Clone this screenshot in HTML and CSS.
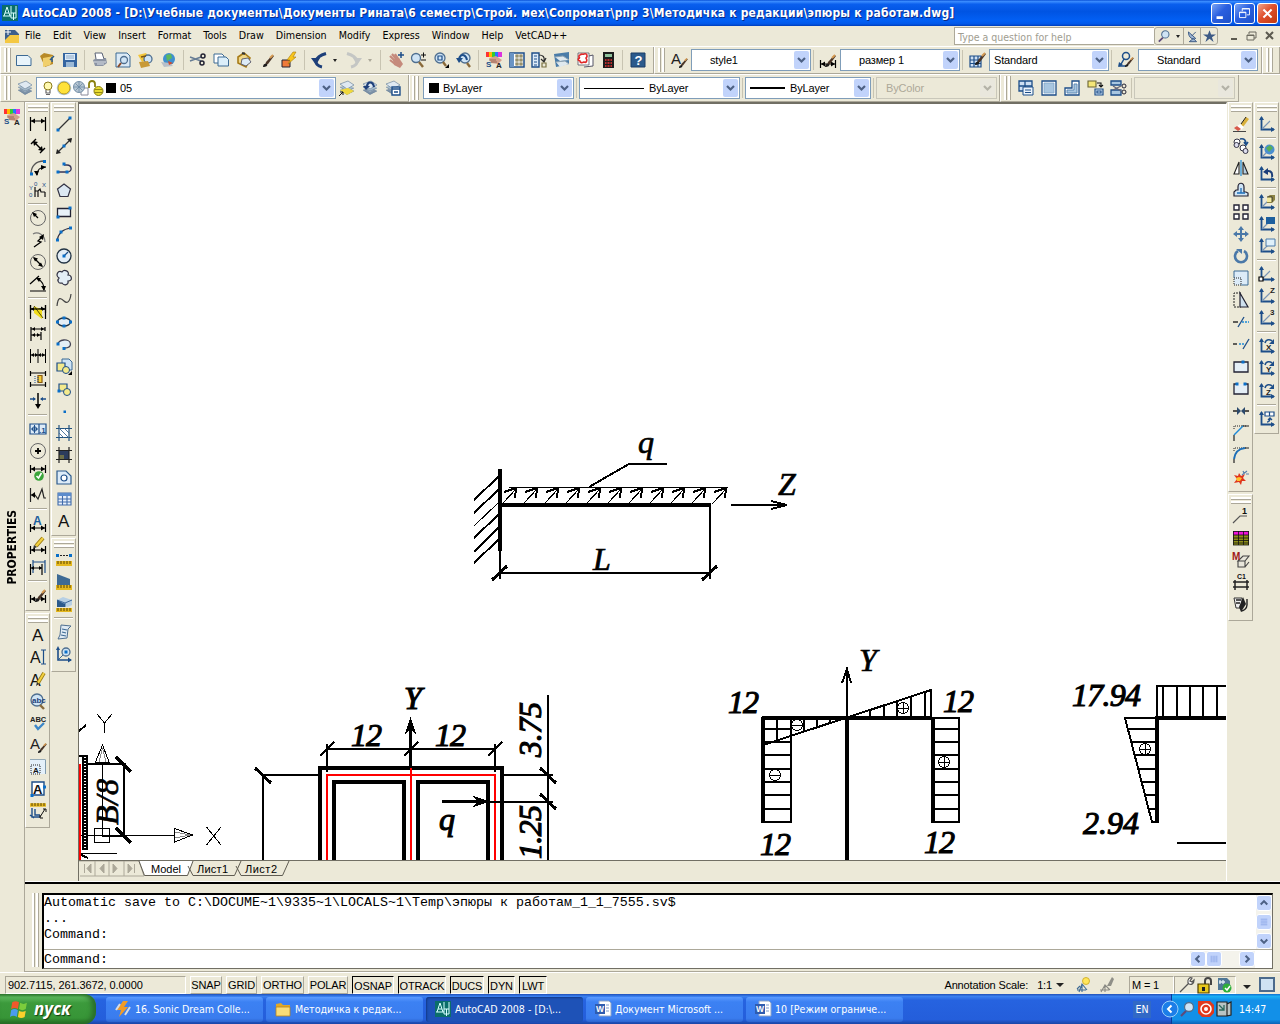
FILE: index.html
```html
<!DOCTYPE html>
<html lang="ru">
<head>
<meta charset="UTF-8">
<title>AutoCAD 2008</title>
<link rel="stylesheet" href="styles.css">
</head>
<body>

<div class="titlebar">
  <i data-icon="acad"></i>
  <span class="title-text">AutoCAD 2008 - [D:\Учебные документы\Документы Рината\6 семестр\Строй. мех\Сопромат\рпр 3\Методичка к редакции\эпюры к работам.dwg]</span>
  <div class="win-buttons">
    <svg class="win-btn" viewBox="0 0 21 21"><path d="M5 15h7" stroke="#fff" stroke-width="3"/></svg>
    <svg class="win-btn" viewBox="0 0 21 21"><path d="M8 8V5h8v7h-3M5 9h7v6H5zM5 9.5h7M8 5.5h8" stroke="#fff" fill="none"/></svg>
    <svg class="win-btn close" viewBox="0 0 21 21"><path d="M6 6l9 9M15 6l-9 9" stroke="#fff" stroke-width="2.2"/></svg>
  </div>
</div>

<div class="menubar">
  <i data-icon="dwg"></i>
  <ul class="menu">
    <li>File</li><li>Edit</li><li>View</li><li>Insert</li><li>Format</li><li>Tools</li><li>Draw</li><li>Dimension</li><li>Modify</li><li>Express</li><li>Window</li><li>Help</li><li>VetCAD++</li>
  </ul>
  <div class="help-box">Type a question for help</div>
  <div class="help-tools">
    <span class="wide"><i data-icon="lens"></i><b class="caret"></b></span>
    <span><i data-icon="dish"></i></span>
    <span><i data-icon="star"></i></span>
  </div>
  <svg class="mdi-buttons" viewBox="0 0 52 16"><path d="M5 11h6" stroke="#5c5a50" stroke-width="2"/><path d="M23 6V4h7v6h-2M21 7h7v5h-7zM21 7.5h7" stroke="#6b695e" fill="none"/><path d="M40 4l7 7M47 4l-7 7" stroke="#5c5a50" stroke-width="2"/></svg>
</div>

<div class="row row-top">
  <div class="toolbar tb-standard">
    <b class="grip"></b>
    <i data-icon="new"></i><i data-icon="open"></i><i data-icon="save"></i><hr>
    <i data-icon="print"></i><i data-icon="preview"></i><i data-icon="publish"></i><i data-icon="globe"></i><hr>
    <i data-icon="cut"></i><i data-icon="copy"></i><i data-icon="paste"></i><i data-icon="brush"></i><i data-icon="blockedit"></i><hr>
    <i data-icon="undo"></i><b class="caret"></b><i data-icon="redo"></i><b class="caret dim"></b><hr>
    <i data-icon="pan"></i><i data-icon="zoompm"></i><i data-icon="zoomwin"></i><i data-icon="zoomprev"></i><hr>
    <i data-icon="props"></i><i data-icon="dcenter"></i><i data-icon="palettes"></i><i data-icon="sheets"></i><i data-icon="markup"></i><i data-icon="calc"></i><hr>
    <i data-icon="help"></i>
  </div>
  <div class="toolbar tb-styles">
    <b class="grip"></b>
    <i data-icon="textstyle"></i><div class="combo c-style"><span>style1</span></div><hr>
    <i data-icon="dimbrush"></i><div class="combo c-style"><span>размер 1</span></div><hr>
    <i data-icon="tablestyle"></i><div class="combo c-near"><span>Standard</span></div><hr>
    <i data-icon="leaderstyle"></i><div class="combo c-style"><span>Standard</span></div>
  </div>
  <div class="toolbar tb-rest"><b class="grip"></b></div>
</div>

<div class="row row-layers">
  <div class="toolbar tb-layers">
    <b class="grip"></b>
    <i data-icon="layers"></i>
    <div class="combo c-layer"><i data-icon="bulb"></i><i data-icon="sun"></i><i data-icon="vpfreeze"></i><i data-icon="unlock"></i><b class="swatch"></b><span>05</span></div>
    <i data-icon="layercur"></i><i data-icon="layerprev"></i><i data-icon="layerstate"></i>
  </div>
  <div class="toolbar tb-bylayer">
    <b class="grip"></b>
    <div class="combo c-color"><b class="swatch"></b><span>ByLayer</span></div><hr>
    <div class="combo c-ltype"><b class="line"></b><span>ByLayer</span></div><hr>
    <div class="combo c-weight"><b class="line thick"></b><span>ByLayer</span></div><hr>
    <div class="combo c-plot off"><span>ByColor</span></div>
  </div>
  <div class="toolbar tb-view">
    <b class="grip"></b>
    <i data-icon="vpdlg"></i><i data-icon="vpone"></i><i data-icon="vppoly"></i><i data-icon="vpobj"></i><i data-icon="vpclip"></i><hr>
    <div class="combo c-scale off"><span></span></div>
  </div>
</div>

<div class="workspace">
  <div class="properties"><i data-icon="props"></i><span>PROPERTIES</span></div>

  <div class="desk">
    <div class="upper">
      <div class="tool-col">
        <div class="vbar dims">
          <b class="grip"></b>
          <i data-icon="dlin"></i><i data-icon="dali"></i><i data-icon="darc"></i><i data-icon="dord"></i><hr>
          <i data-icon="drad"></i><i data-icon="djog"></i><i data-icon="ddia"></i><i data-icon="dang"></i><hr>
          <i data-icon="dquick"></i><i data-icon="dbase"></i><i data-icon="dcont"></i><i data-icon="dspace"></i><i data-icon="dbreak"></i><hr>
          <i data-icon="dtol"></i><i data-icon="dcen"></i><i data-icon="dinsp"></i><i data-icon="djogl"></i><hr>
          <i data-icon="dedit"></i><i data-icon="dtedit"></i><i data-icon="dupd"></i><hr>
          <i data-icon="dimbrush"></i>
        </div>
        <div class="vbar texts">
          <b class="grip"></b>
          <i data-icon="A"></i><i data-icon="AI"></i><i data-icon="Aedit"></i><i data-icon="find"></i><i data-icon="abc"></i><i data-icon="textstyle"></i><i data-icon="Ascale"></i><i data-icon="Ajust"></i><i data-icon="Aconv"></i>
        </div>
      </div>
      <div class="tool-col">
        <div class="vbar draws">
          <b class="grip"></b>
          <i data-icon="line"></i><i data-icon="xline"></i><i data-icon="pline"></i><i data-icon="polygon"></i><i data-icon="rect"></i><i data-icon="arc"></i><i data-icon="circle"></i><i data-icon="cloud"></i><i data-icon="spline"></i><i data-icon="ellipse"></i><i data-icon="earc"></i><i data-icon="insert"></i><i data-icon="block"></i><i data-icon="point"></i><i data-icon="hatch"></i><i data-icon="gradient"></i><i data-icon="region"></i><i data-icon="table"></i><i data-icon="A"></i>
        </div>
        <div class="vbar inquiry">
          <b class="grip"></b>
          <i data-icon="dist"></i><i data-icon="area"></i><i data-icon="mass"></i><hr>
          <i data-icon="list"></i><i data-icon="locate"></i>
        </div>
      </div>

      <div class="model">
        <svg class="drawing" viewBox="79 104 1147 756" id="drawing">
          <!-- cantilever beam -->
          <g class="w2">
            <path class="w4" d="M500 469V551M500 505H711"/>
            <path d="M498 477L474 500M498 490L474 513M498 515L474 538M498 528L474 552M498 540L474 563"/>
            <path class="w1" d="M498 503L474 526M509 487.500H728"/>
            <g id="load"></g>
            <path d="M589 487L629 464H667M731 505H787M771 501L787 505L771 509"/>
            <path d="M500 551V579M710 505V579M500 573H710"/>
            <path class="w3" d="M492 580L507 566M702 580L717 566"/>
          </g>
          <!-- UCS icon -->
          <g class="w1">
            <path d="M97 714L104.500 723L112 714M104.500 723V733M206.500 827L221 845M221 827L206.500 845"/>
            <path d="M102.500 745L95.500 762H109zM102.500 762V835M94.500 828.500h15v14h-15zM79 835.500H174M174.500 828.500V842L192.500 835z"/>
            <path stroke="#888" d="M102.500 748L99 762M102.500 748L106 762M175 832L190 835M175 838L190 835"/>
          </g>
          <path class="wall" d="M85 755V850"/>
          <path class="wall-dots" d="M85 757V850"/>
          <path class="w1" d="M79 853.500H117"/>
          <path class="w2" d="M79 731L86 725M87 764H126M123.500 764V837M102 835.500H126M79 756H84M79 854L88 858"/>
          <path class="w3" d="M116 757L131 772M116 828L131 843"/>
          <path class="red" d="M79.500 764V860"/>
          <!-- frame -->
          <path class="w4" d="M320 860V768H502V860M334 860V782H404V860M418 860V782H488V860"/>
          <path class="red" d="M327 860V775H495V860M411 768V860"/>
          <g class="w2">
            <path d="M263 860V775H319M327 772V744M495 772V744M327 749H495M320 756L334 742M404 756L418 742M488 756L502 742"/>
            <path d="M503 775H553M548 695V860M480 801.500H553"/>
            <path class="w3" d="M255 768L271 783M540 768L556 783M540 794L556 809M410.500 768V722M442 801.500H478"/>
            <path class="fill" d="M410.500 717L405 734L410.500 730L416 734zM490 801.500L473 796L477 801.500L473 807z"/>
          </g>
          <!-- moment and force diagrams -->
          <g class="w2">
            <path class="w4" d="M762 718H932M763 717V823M847 718V860M932.500 717V823"/>
            <path d="M847 718V670M842 683L847 669L851 683M763 745L931 690V718M763 822H791V718M931 718H959V822H931"/>
            <path d="M777 718V741M804 718V731M817 718V727M830 718V723M870 718V710M884 718V705M897 718V701M911 718V696M925 718V692"/>
            <path d="M763 729H791M763 742H791M763 755H791M763 769H791M763 782H791M763 795H791M763 809H791"/>
            <path d="M932 729H959M932 742H959M932 755H959M932 769H959M932 782H959M932 795H959M932 809H959"/>
            <path class="w4" d="M1157 823V718H1226"/>
            <path d="M1157 718V686H1226M1163 686V718M1177 686V718M1190 686V718M1203 686V718M1217 686V718"/>
            <path d="M1157 718H1125L1152 822H1157M1128 729H1157M1131 742H1157M1135 755H1157M1138 769H1157M1142 782H1157M1145 795H1157M1149 809H1157M1177 842.500H1226"/>
          </g>
          <g class="w1" id="signs"></g>
          <g class="labels">
            <text x="638" y="453">q</text>
            <text x="778" y="495" textLength="21">Z</text>
            <text x="593" y="570">L</text>
            <g class="bold">
              <text x="404" y="709">Y</text><text x="439" y="830">q</text>
              <text x="351" y="746" textLength="31">12</text><text x="435" y="746" textLength="31">12</text>
              <text transform="translate(541 757) rotate(-90)" textLength="55">3.75</text>
              <text transform="translate(541 859) rotate(-90)" textLength="54">1.25</text>
              <text x="728" y="713" textLength="31">12</text><text x="943" y="712" textLength="31">12</text>
              <text x="760" y="855" textLength="31">12</text><text x="924" y="853" textLength="31">12</text>
              <text x="1072" y="706" textLength="69">17.94</text><text x="1083" y="834" textLength="56">2.94</text>
            </g>
            <text x="859" y="671" textLength="21">Y</text>
            <text transform="translate(118 825) rotate(-90)" textLength="46">B/8</text>
          </g>
        </svg>
        <svg class="tabs" viewBox="79 861 1147 16">
          <path d="M79 861H139L144 876H80M95 861V876M109 861V876M124 861V876" fill="none" stroke="#aca899"/>
          <path d="M139 861L144.500 875.500H187L193 861z" fill="#fff"/>
          <path d="M139 861L144.500 875.500H187.500L193 861M188 866L193 875.500H234.500L241 861M236 866L241 875.500H282.500L289 861" fill="none" stroke="#5f5c52"/>
          <path d="M84.500 864v9M91 864v9l-4-4.500zM104 864v9l-4-4.500zM113 864v9l4-4.500zM128 864v9l4-4.500zM134.500 864v9" fill="#aca899" stroke="#aca899"/>
          <text x="151" y="873" textLength="30">Model</text><text x="197" y="873" textLength="31">Лист1</text><text x="245" y="873" textLength="32">Лист2</text>
        </svg>
      </div>

      <div class="tool-col right">
        <div class="vbar modify">
          <b class="grip"></b>
          <i data-icon="erase"></i><i data-icon="mcopy"></i><i data-icon="mirror"></i><i data-icon="offset"></i><i data-icon="array"></i><i data-icon="move"></i><i data-icon="rotate"></i><i data-icon="scale"></i><i data-icon="stretch"></i><i data-icon="trim"></i><i data-icon="extend"></i><i data-icon="breakpt"></i><i data-icon="break"></i><i data-icon="join"></i><i data-icon="chamfer"></i><i data-icon="fillet"></i><i data-icon="explode"></i>
        </div>
        <div class="vbar custom">
          <b class="grip"></b>
          <i data-icon="posnum"></i><i data-icon="spec"></i><i data-icon="mblock"></i><i data-icon="c1"></i><i data-icon="pens"></i>
        </div>
      </div>
      <div class="tool-col">
        <div class="vbar ucs">
          <b class="grip"></b>
          <i data-icon="ucs"></i><hr>
          <i data-icon="ucsworld"></i><i data-icon="ucsprev"></i><hr>
          <i data-icon="ucsobj"></i><i data-icon="ucsface"></i><i data-icon="ucsview"></i><hr>
          <i data-icon="ucsorg"></i><i data-icon="ucsz"></i><i data-icon="ucs3"></i><hr>
          <i data-icon="ucsrx"></i><i data-icon="ucsry"></i><i data-icon="ucsrz"></i><hr>
          <i data-icon="ucsapply"></i>
        </div>
      </div>
    </div>

    <div class="command">
      <b class="grip"></b>
      <div class="cmd-box">
        <div class="history">
          <pre>Automatic save to C:\DOCUME~1\9335~1\LOCALS~1\Temp\эпюры к работам_1_1_7555.sv$
...
Command:</pre>
          <div class="vscroll">
            <svg viewBox="0 0 15 15"><path d="M4 9l3.500-3.500L11 9"/></svg>
            <svg viewBox="0 0 15 15"><path class="ridge" d="M4 4.500h7M4 6.500h7M4 8.500h7M4 10.500h7"/></svg>
            <svg viewBox="0 0 15 15"><path d="M4 6l3.500 3.500L11 6"/></svg>
          </div>
        </div>
        <div class="prompt">
          <pre>Command:</pre>
          <div class="hscroll">
            <svg viewBox="0 0 15 15"><path d="M9 4L5.500 7.500L9 11"/></svg>
            <svg viewBox="0 0 15 15"><path class="ridge" d="M4.500 4v7M6.500 4v7M8.500 4v7M10.500 4v7"/></svg>
            <svg viewBox="0 0 15 15"><path d="M6 4l3.500 3.500L6 11"/></svg>
          </div>
        </div>
      </div>
    </div>
  </div>
</div>

<div class="status">
  <div class="coords">902.7115, 261.3672, 0.0000</div>
  <div class="modes">
    <span class="m-snap">SNAP</span><span class="m-grid">GRID</span><span class="m-ortho">ORTHO</span><span class="m-polar">POLAR</span><span class="m-osnap on">OSNAP</span><span class="m-otrack on">OTRACK</span><span class="m-ducs on">DUCS</span><span class="m-dyn on">DYN</span><span class="m-lwt on">LWT</span>
  </div>
  <div class="annotation"><span class="anno-label">Annotation Scale:</span><span>1:1</span><b class="caret big"></b><i data-icon="annovis"></i><i data-icon="annoauto"></i></div>
  <div class="msize">M = 1</div>
  <div class="st-tray"><i data-icon="wrench"></i><i data-icon="padlock"></i><i data-icon="trust"></i></div>
  <b class="caret big"></b>
  <b class="clean"></b>
</div>

<div class="taskbar">
  <div class="start"><i data-icon="flag"></i><span>пуск</span></div>
  <div class="tasks">
    <div class="task"><i data-icon="winamp"></i><span>16. Sonic Dream Colle...</span></div>
    <div class="task"><i data-icon="folder"></i><span>Методичка к редак...</span></div>
    <div class="task active"><i data-icon="acad"></i><span>AutoCAD 2008 - [D:\...</span></div>
    <div class="task"><i data-icon="word"></i><span>Документ Microsoft ...</span></div>
    <div class="task"><i data-icon="word"></i><span>10 [Режим ограниче...</span></div>
  </div>
  <span class="lang">EN</span>
  <div class="tray"><i data-icon="expand"></i><i data-icon="lens"></i><i data-icon="shield"></i><i data-icon="tablet"></i><span>14:47</span></div>
</div>

<script src="script.js"></script>
</body>
</html>
```

FILE: styles.css
```css
* {
  box-sizing: border-box;
}

body {
  margin: 0;
  width: 1280px;
  height: 1024px;
  overflow: hidden;
  display: flex;
  flex-direction: column;
  background: #ece9d8;
  color: #000;
  font: 10.5px "DejaVu Sans Condensed", "Noto Sans", sans-serif;
}

i[data-icon] {
  flex: none;
  display: flex;
  align-items: center;
  justify-content: center;
}

i[data-icon] svg {
  width: 16px;
  height: 16px;
  overflow: visible;
  font-style: normal;
}

hr {
  flex: none;
  margin: 0;
  border: 0;
}

/* title bar */
.titlebar {
  height: 26px;
  flex: none;
  display: flex;
  align-items: center;
  padding: 0 2px 0 2px;
  background: linear-gradient(#0a52d8 0, #3a8cff 6%, #0a5fee 16%, #0054e3 45%, #0260f5 80%, #0258e8 92%, #003dba 100%);
}

.title-text {
  flex: 1;
  margin-left: 4px;
  color: #fff;
  font-size: 12px;
  font-weight: bold;
  letter-spacing: 0.165px;
  white-space: nowrap;
  text-shadow: 1px 1px #0a2a86;
}

.win-buttons {
  display: flex;
  gap: 2px;
}

.win-btn {
  width: 21px;
  height: 21px;
  border: 1px solid #fff;
  border-radius: 3px;
  background: linear-gradient(135deg, #7ba4f4, #2a5fe0 45%, #1d50c8);
}

.win-btn.close {
  background: linear-gradient(135deg, #f0a48c, #e0502c 45%, #c03810);
}

/* menu bar */
.menubar {
  height: 20px;
  flex: none;
  display: flex;
  align-items: center;
  padding: 0 2px 0 4px;
}

.menu {
  flex: 1;
  display: flex;
  gap: 12px;
  margin: 0 0 1px 5px;
  padding: 0;
  list-style: none;
  font-size: 10.65px;
}

.help-box {
  width: 200px;
  height: 18px;
  padding: 2px 3px;
  background: #fff;
  border: 1px solid #aca899;
  border-right: 0;
  color: #a09d90;
  line-height: 14px;
}

.help-tools {
  display: flex;
  height: 18px;
  border: 1px solid #aca899;
  border-radius: 3px;
}

.help-tools span {
  width: 17px;
  display: flex;
  align-items: center;
  justify-content: center;
}

.help-tools span + span {
  border-left: 1px solid #aca899;
}

.help-tools svg {
  width: 13px !important;
}

.help-tools .wide {
  width: 28px;
  gap: 5px;
}

.mdi-buttons {
  width: 52px;
  height: 16px;
  margin-left: 8px;
}

.caret {
  flex: none;
  width: 0;
  height: 0;
  border: 2.5px solid transparent;
  border-top: 3px solid #222;
  border-bottom: 0;
}

.caret.dim {
  border-top-color: #aca899;
}

.caret.big {
  border-width: 4px 4px 0;
}

/* horizontal toolbars */
.row {
  display: flex;
  flex: none;
  height: 28px;
  border-top: 1px solid #fff;
}

.toolbar {
  display: flex;
  align-items: center;
  flex: none;
  border-right: 1px solid #aca899;
  border-bottom: 1px solid #aca899;
  border-left: 1px solid #fff;
}

.toolbar > i {
  width: 23px;
}

.toolbar hr {
  width: 1px;
  height: 20px;
  margin: 0 3px;
  background: #c8c4b2;
}

.toolbar .grip {
  flex: none;
  width: 7px;
  height: 24px;
  background: linear-gradient(90deg, #fff 2px, #aca899 2px 3px, #ece9d8 3px 4px, #fff 4px 6px, #aca899 6px);
}

.tb-standard { width: 654px; padding-left: 3px; }
.tb-standard > i { width: 22.8px; }
.tb-standard .grip { margin-right: 2px; }
.tb-standard .caret { margin: 0 5px 0 3px; }
.tb-styles { width: 608px; padding-left: 3px; }
.tb-styles .grip { margin-right: 1px; }
.tb-styles > i { width: 25px; }
.tb-styles hr { margin: 0 1px 0 2px; }
.tb-rest { flex: 1; padding-left: 3px; }

.tb-layers { width: 409px; padding-left: 3px; }
.tb-layers .grip { margin-right: 2px; }
.tb-layers > .combo { margin-right: -1px; }
.tb-bylayer { width: 591px; padding-left: 2px; }
.tb-bylayer hr { margin: 0 2px; }
.tb-bylayer .grip { margin-right: 4px; }
.tb-view { width: 239px; padding-left: 3px; }
.tb-view .grip { margin-right: 3px; }
.tb-view hr { margin: 0 2px; }

.combo {
  flex: none;
  height: 22px;
  display: flex;
  align-items: center;
  background: #fff;
  border: 1px solid #7f9db9;
  font: 11px "Liberation Sans", Arial, sans-serif;
  letter-spacing: -0.15px;
}

.combo span {
  flex: 1;
}

.combo::after {
  content: "";
  width: 15px;
  height: 18px;
  margin-right: 1px;
  border-radius: 2px;
  background: url("data:image/svg+xml,%3Csvg xmlns='http://www.w3.org/2000/svg' viewBox='0 0 15 18'%3E%3Cpath d='M4 7l3.500 3.500L11 7' fill='none' stroke='%234d6185' stroke-width='2.200'/%3E%3C/svg%3E") #c1d3fb;
}

.combo.off {
  background: #ece9d8;
  border-color: #c9c7ba;
  color: #aca899;
}

.combo.off::after {
  background-color: #e8e5d6;
  filter: grayscale(1) opacity(.4);
}

.c-style { width: 120px; padding-left: 18px; }
.c-near { width: 120px; padding-left: 4px; }
.c-layer { width: 300px; padding-left: 3px; }
.c-layer i { width: 16px; }
.c-layer i + .swatch { margin-left: 2px; }
.c-color { width: 151px; padding-left: 5px; }
.c-ltype { width: 161px; padding-left: 4px; }
.c-weight { width: 126px; padding-left: 4px; }
.c-plot { width: 121px; padding-left: 9px; }
.c-scale { width: 101px; }

.swatch {
  width: 10px;
  height: 10px;
  margin-right: 4px;
  background: #000;
}

.line {
  width: 60px;
  height: 1px;
  margin-right: 5px;
  background: #000;
}

.line.thick {
  width: 35px;
  height: 2px;
}

/* workspace */
.workspace {
  flex: none;
  height: 870px;
  display: flex;
}

.properties {
  width: 25px;
  flex: none;
  border-right: 1px solid #aca899;
  display: flex;
  flex-direction: column;
  align-items: center;
  padding-top: 7px;
}

.properties span {
  margin-top: 385px;
  writing-mode: vertical-rl;
  transform: rotate(180deg);
  font: bold 12px/14px "DejaVu Sans Condensed", sans-serif;
  letter-spacing: -0.05px;
}

.desk {
  flex: 1;
  display: flex;
  flex-direction: column;
}

.upper {
  height: 780px;
  flex: none;
  display: flex;
  border-bottom: 1px solid #fff;
}

.tool-col {
  width: 26px;
  flex: none;
  display: flex;
  flex-direction: column;
  gap: 2px;
}

.tool-col.right {
  margin-left: 1px;
}

.vbar {
  width: 25px;
  display: flex;
  flex-direction: column;
  align-items: center;
  border: 1px solid #fff;
  border-right-color: #aca899;
  border-bottom-color: #aca899;
}

.vbar i {
  width: 22px;
  height: 22.05px;
}

.vbar hr {
  width: 19px;
  height: 2px;
  margin: 2px 0;
  background: #aca899;
  border-bottom: 1px solid #fff;
}

.vbar .grip {
  flex: none;
  width: 20px;
  height: 7px;
  margin: 2px 0 1px;
  background: linear-gradient(#fff 2px, #aca899 2px 3px, #ece9d8 3px 4px, #fff 4px 6px, #aca899 6px);
}

.dims { height: 509px; }
.texts { height: 215px; }
.draws { height: 434px; }
.inquiry { height: 134px; }
.modify { height: 390px; }
.custom { height: 127px; }
.ucs { height: 332px; }

.model {
  width: 1149px;
  flex: none;
  margin-left: 1px;
  border-top: 2px solid #716f64;
  border-left: 1px solid #716f64;
  border-right: 1px solid #fff;
  display: flex;
  flex-direction: column;
}

.drawing {
  width: 1147px;
  height: 756px;
  flex: none;
  background: #fff;
  shape-rendering: crispEdges;
  fill: none;
  stroke: #000;
}

.tabs {
  width: 1147px;
  height: 17px;
  flex: none;
  border-top: 1px solid #716f64;
  font: 11px "Liberation Sans", Arial, sans-serif;
}

.w1 { stroke-width: 1; stroke: #000; }
.w2 { stroke-width: 2; stroke: #000; }
.w3 { stroke-width: 3; }
.w4 { stroke-width: 4; stroke: #000; }
.fill { fill: #000; stroke: none; }
.red { stroke: #f00; stroke-width: 2; }
.wall { stroke-width: 6; }
.wall-dots { stroke: #fff; stroke-width: 2; stroke-dasharray: 1 2; }

.labels {
  fill: #000;
  font: italic 32px "Liberation Serif", "Times New Roman", serif;
}

.labels text {
  stroke: #000;
  stroke-width: .7;
}

.labels .bold text {
  stroke-width: 1.1;
}

/* command window */
.command {
  flex: 1;
  display: flex;
  border-top: 2px solid #000;
  padding: 9px 7px 2px 7px;
  border-bottom: 1px solid #aca899;
}

.command > .grip {
  width: 7px;
  height: 74px;
  margin-right: 3px;
  background: linear-gradient(90deg, #fff 2px, #aca899 2px 3px, #ece9d8 3px 4px, #fff 4px 6px, #aca899 6px);
}

.cmd-box {
  flex: 1;
  display: flex;
  flex-direction: column;
  background: #fff;
  border: 1px solid #716f64;
  border-top: 2px solid #000;
  border-left: 2px solid #000;
}

.cmd-box pre {
  flex: 1;
  margin: 0;
  font: 13.33px/16px "Liberation Mono", "Courier New", monospace;
}

.history {
  height: 55px;
  display: flex;
  border-bottom: 1px solid #aca899;
}

.prompt {
  flex: 1;
  display: flex;
}

.prompt pre {
  padding-top: 2px;
}

.vscroll {
  width: 16px;
  display: flex;
  flex-direction: column;
  justify-content: space-between;
  background: #f4f3ec;
}

.hscroll {
  width: 65px;
  margin: 1px 17px 0 0;
  display: flex;
  background: #f4f3ec;
}

.hscroll svg:last-child {
  margin-left: auto;
}

.vscroll svg,
.hscroll svg {
  width: 16px;
  height: 16px;
  border: 1px solid #fff;
  border-radius: 3px;
  background: #c1d3fb;
  fill: none;
  stroke: #4d6185;
  stroke-width: 2.2;
}

.ridge {
  stroke: #8fa9e8;
  stroke-width: 1;
}

/* status bar */
.status {
  height: 22px;
  flex: none;
  display: flex;
  align-items: center;
  padding: 2px 5px 0 5px;
  font: 11px "Liberation Sans", Arial, sans-serif;
  letter-spacing: -0.15px;
  border-top: 1px solid #fff;
}

.coords {
  width: 181px;
  height: 18px;
  padding-left: 2px;
  line-height: 17px;
  letter-spacing: -0.08px;
  border: 1px solid;
  border-color: #aca899 #fff #fff #aca899;
}

.modes {
  display: flex;
  gap: 4px;
  margin-left: 4px;
}

.modes span {
  height: 18px;
  line-height: 16px;
  text-align: center;
  border: 1px solid;
  border-color: #fff #aca899 #aca899 #fff;
}

.modes .on {
  line-height: 18px;
  border-color: #000 #fff #fff #000;
}

.m-snap { width: 32px; }
.m-grid { width: 31px; }
.m-ortho { width: 43px; }
.m-polar { width: 40px; }
.m-osnap { width: 42px; }
.m-otrack { width: 48px; }
.m-ducs { width: 34px; }
.m-dyn { width: 27px; }
.m-lwt { width: 28px; }

.annotation {
  flex: 1;
  display: flex;
  align-items: center;
  justify-content: flex-end;
  padding-right: 14px;
}

.anno-label {
  margin-right: 9px;
}

.annotation .caret {
  margin: 0 11px 0 4px;
}

.annotation i + i {
  margin-left: 8px;
}

.msize {
  width: 45px;
  height: 18px;
  padding-left: 2px;
  line-height: 17px;
  border: 1px solid;
  border-color: #aca899 #fff #fff #aca899;
}

.st-tray {
  width: 62px;
  height: 18px;
  display: flex;
  align-items: center;
  justify-content: space-evenly;
  border: 1px solid;
  border-color: #aca899 #fff #fff #aca899;
}

.status > .caret {
  margin: 4px 8px 0 7px;
}

.clean {
  width: 16px;
  height: 15px;
  border: 2px solid #4b6a8c;
  background: #cfe2f2;
}

/* taskbar */
.taskbar {
  height: 30px;
  flex: none;
  display: flex;
  align-items: center;
  background: linear-gradient(#1f4fb8 0, #3a80f0 8%, #2663e0 20%, #245edb 85%, #1a45a5 100%);
  color: #fff;
}

.start {
  width: 96px;
  height: 30px;
  display: flex;
  align-items: center;
  padding-left: 9px;
  border-radius: 0 12px 12px 0;
  background: linear-gradient(#2f7d2f 0, #5cb85c 10%, #3c9a3c 30%, #379537 80%, #246b24 100%);
  box-shadow: inset -4px 0 5px #2a6e2a;
}

.start i svg {
  width: 20px;
  height: 18px;
}

.start span {
  margin-left: 5px;
  font: italic bold 17px/22px "Open Sans", "Noto Sans", sans-serif;
  letter-spacing: -0.1px;
  text-shadow: 1px 1px 1px #123d12;
}

.tasks {
  flex: 1;
  display: flex;
  gap: 3px;
  margin-left: 10px;
}

.task {
  width: 157px;
  height: 25px;
  display: flex;
  align-items: center;
  padding-left: 9px;
  border-radius: 3px;
  background: linear-gradient(#5c9bff, #3c81f3 20%, #3a7cee 85%, #2c65cf);
  white-space: nowrap;
}

.task span {
  margin-left: 4px;
  font-size: 10.6px;
}

.task.active {
  background: #1e52b7;
  box-shadow: inset 1px 1px 2px #123a88;
}

.lang {
  width: 18px;
  margin-right: 20px;
  background: #3169c6;
  line-height: 17px;
  text-align: center;
}

.tray {
  width: 109px;
  height: 30px;
  display: flex;
  align-items: center;
  gap: 2px;
  border-left: 1px solid #0a3a9a;
  background: linear-gradient(#0e6fd0 0, #1bb0f5 8%, #1290e8 20%, #1290e8 85%, #0c62b5 100%);
}

.tray i:first-child {
  margin-left: -10px;
}

.tray span {
  margin-left: 5px;
}
```

FILE: script.js
```javascript
const NAVY = '#1d4e89';

// small building blocks shared by the toolbar icons
const p = (d, stroke = '#000', w = 1.2, fill = 'none') => `<path d="${d}" stroke="${stroke}" stroke-width="${w}" fill="${fill}"/>`;
const f = (d, fill) => `<path d="${d}" fill="${fill}"/>`;
const dots = (...pts) => pts.map(([x, y]) => `<rect x="${x - 1.5}" y="${y - 1.5}" width="3" height="3" fill="#0a6fc8"/>`).join('');
const txt = (s, x, y, size, fill = '#111', weight = 'normal') => `<text x="${x}" y="${y}" font-family="Liberation Sans" font-size="${size}" font-weight="${weight}" fill="${fill}">${s}</text>`;
const stack = f('M1 10l8-3 6 4-7 4z', '#7f93a8') + f('M1 7l8-3 6 4-7 4z', '#a8bccd') + f('M1 4l8-3 6 4-7 4z', '#dfe9f2') + p('M1 4l8-3 6 4-7 4zM1 7l7 4 7-3M1 10l7 4 7-3', '#6f879e', .7);
const lens = (x, y, r) => `<circle cx="${x}" cy="${y}" r="${r}" fill="#cfe4f5" stroke="#4f6f90" stroke-width="1.3"/>`;
const hdim = (y) => p(`M.5 ${y - 4}v8M15.500 ${y - 4}v8M1 ${y}h14`) + f(`M1 ${y}l4-2.500v5zM15 ${y}l-4-2.500v5z`, '#000');
const brush = f('M14.500 3l1.500 1-6 8-3 1 1-3z', '#4a3528') + f('M5 15c0-3 2-4 4-3 1 2-1 3-4 3z', '#1c1c1c') + p('M12 6l3-3', '#d69a52', 1.8);
const arms = p('M2.500 1.500V13.500H15', NAVY, 1.8) + f('M2.500 0L0 4h5zM16 13.500l-4-2.500v5z', NAVY);
const axes = arms + p('M3 13L11 5', '#7894b4', 1.1);
const rot = p('M6 5C7 1 11 1 13 3', NAVY, 1.5) + f('M15 1v5h-5z', NAVY);

const icons = {
  acad: '<rect width="16" height="16" fill="#0b6e6a"/>' + p('M2 11L5 2L8 11M3 8h4M9 1v7M14 1v7M9 8h5v5H9zM11.500 8v7M1 11h8', '#d8ffff', 1),
  dwg: f('M1 2h10l4 4v9H1z', '#3d5f8c') + f('M1 12l5-5h9v8H1z', '#f4c842') + p('M1 4h6M4 1v6', '#fff', 1),
  lens: lens(9, 6, 4.500) + p('M6 10L1 15', '#5c4a7a', 2.2),
  dish: p('M3 3c0 7 5 10 9 8zM12 3l-5 5M4 15h9l-4-4z', '#3d5a85', 1.2, '#9fb6d4'),
  star: f('M8 1l2 5h6l-5 3.500 2 6-5-4-5 4 2-6-5-3.500h6z', '#3d5a85'),
  new: p('M.5 3.500H12l3 3v7H.5z', '#3d6a94', 1, '#e8f4fb'),
  open: f('M1 4l4-3 9 2v9l-8 3z', '#b88a28') + f('M4 6l11-2-4 9-7 2z', '#f0cf6c') + p('M13 5v5M11 8l4-4', '#2b5a8c', 1.5),
  save: f('M1 1h14v14H1z', '#3565a0') + f('M3 2h10v6H3z', '#dcebfa') + f('M4 10h8v5H4z', '#9bb9d6') + p('M4 4h8M4 6h8', '#7a97b8', .8),
  print: f('M1 8l4-2h9l1 5-4 3H3z', '#8a93a3') + p('M4 7L3 1h7l2 6', '#5a6275', 1, '#fff') + p('M2 10h12M5 12h7', '#dce2ea', 1.2),
  preview: p('M1 1h11l3 3v11H1z', '#3d6a94', 1, '#dbeaf6') + lens(9, 8, 3.500) + p('M6 11L3 15', '#8a4a2a', 2),
  publish: f('M1 3l8-2 4 6-8 3z', '#f2c53a') + lens(11, 7, 4) + f('M2 10l9-1 2 5-9 2z', '#c89a38') + p('M4 5l5-1', '#7a5414', 1.5),
  globe: '<circle cx="9" cy="7" r="6" fill="#3f8fd0"/>' + f('M6 3l5-1 1 4-5 3z', '#5cb85c') + f('M1 10l9 1 3 3-9 1z', '#b7bfc9') + f('M8 9l5 2-4 2z', '#d04c2f'),
  cut: p('M0 5l11 4M0 9l11-4', '#667c94', 1.4) + '<circle cx="13" cy="4" r="2" fill="none" stroke="#223" stroke-width="1.500"/><circle cx="12" cy="11" r="2" fill="none" stroke="#223" stroke-width="1.500"/>',
  copy: p('M1 2h8l2 2v7H1z', '#3d6a94', 1, '#fff') + p('M5 5h8l2.500 2.500V14H5z', '#3d6a94', 1, '#dbeefa'),
  paste: p('M2 5l6-4 6 5-4 9-8-4z', '#a77b18', 1.6, '#f1d888') + p('M6 7l6-1 3 4-5 4-5-2z', '#556', .9, '#dcebf7') + p('M6 1l3 1', '#333', 2),
  brush: brush,
  blockedit: p('M1 8h8v7H1z', '#223', 1, '#ef7a3a') + f('M12 0l-6 8h3l-2 4 8-7h-3l3-5z', '#f8c51c') + p('M12 0l-6 8h3l-2 4 8-7h-3l3-5z', '#a8780c', .6),
  undo: p('M11 15C2 13 3 5 15 1.500', '#1d3f7a', 3) + f('M0 6l9 0-4 7z', '#1d3f7a'),
  redo: p('M5 15C14 13 13 5 1 1.500', '#c4c6c4', 3) + f('M16 6h-9l4 7z', '#c4c6c4'),
  pan: p('M2 4l5 5M4 2l5 6M7 2l4 6M2 8l5 4', '#c58a7c', 2.2) + f('M5 8l6-2 4 6-3 4-6-3z', '#c58a7c') + p('M13 0v6M10 3h6', NAVY, 1.5),
  zoompm: lens(6, 6, 4.500) + p('M9 10l4 5', '#8a6a3a', 2.4) + p('M11 3h5M13.500 .5v5M11 8h5', '#111', 1),
  zoomwin: lens(7, 6, 5) + p('M5 4h4v4H5z', NAVY, 1.2) + p('M10 10l3 4', '#8a6a3a', 2.4) + f('M16 12v4h-4z', '#000'),
  zoomprev: lens(9, 6, 5) + p('M11 11l3 4', '#8a6a3a', 2.4) + p('M3 6c3-5 7-3 8 2', NAVY, 2) + f('M0 6h7l-4 5z', NAVY),
  props: f('M0 0h3v5H0z', '#f33') + f('M3 0h3v5H3z', '#fb0') + f('M6 0h3v5H6z', '#3c3') + f('M9 0h3v5H9z', '#27f') + f('M12 0h4v5h-4z', '#d3d') + f('M3 6l7-2 6 4-4 4-7-1z', '#d3a08c') + p('M3 8h7M5 10h6', '#8a5a4c', .8) + txt('S', 0, 15, 8, '#1d4e89', 'bold') + txt('A', 10, 16, 8, '#222', 'bold'),
  dcenter: p('M1 1h14v14H1z', NAVY, 1.5, '#fff') + f('M1 1h4v14H1z', '#6a94c4') + [3, 7, 11].map(y => p(`M7 ${y}h2v2H7zM11 ${y}h2v2h-2z`, '#7a7242', 1.1)).join(''),
  palettes: p('M1 1h7v14H1z', NAVY, 1.4, '#dbeaf8') + p('M3 4h3M3 7h3M3 10h3M3 13h3', NAVY, 1) + p('M8 3c4 0 6 2 5 6M10 7l3 3 2-4', '#2c2c2c', 1.2) + p('M11 11h4v4h-4z', '#7a7242', 1.2),
  sheets: f('M0 2l15-2v12L2 15z', '#4a7ca8') + f('M1 5l8-1 6 4-9 1zM2 10l9-1 4 3-9 3z', '#dfe9ee') + p('M1 5l8-1 6 4M2 10l9-1 4 3', '#8fa3b1', 1),
  markup: p('M12 4l4-1v11l-9 1', '#556', 1, '#fff') + p('M1 1h11v12H1z', '#556', .8, '#fff') + p('M3 3c2-2 3 0 4-1 3-1 4 2 2 4 2 3 0 5-2 4-2 1-4 1-4-1C0 8 1 6 3 6 1 5 2 3 3 3z', '#e02828', 1.6),
  calc: f('M3 0h11v16H3z', '#1c1c1c') + f('M5 2h7v3H5z', '#8fc29a') + p('M5 8h7M5 11h7M5 14h7', '#e33', 1.4) + p('M7 6v10M10 6v10', '#1c1c1c', 1),
  help: f('M1 1h14v14H1z', '#2b5a8c') + p('M1 1h14v14H1z', '#1b3d66', 1) + txt('?', 4.5, 13, 13, '#fff', 'bold'),
  textstyle: txt('A', 0, 12, 15, '#222') + '<g transform="translate(4 4) scale(.8)">' + brush + '</g>',
  dimbrush: hdim(12) + brush,
  tablestyle: p('M1 4h11v11H1zM1 8h11M5 4v11M1 11.500h11M9 4v11', NAVY, 1.2, '#cfe0f3') + '<g transform="translate(1 -2)">' + brush + '</g>',
  leaderstyle: '<circle cx="8" cy="4" r="3.500" fill="none" stroke="#1d4e89" stroke-width="1.500"/>' + p('M6 7L2 14h6', NAVY, 1.5) + f('M0 15l1-5 4 3z', NAVY) + '<g transform="translate(3 3) scale(.8)">' + brush + '</g>',

  // layers
  layers: stack,
  bulb: '<circle cx="8" cy="6" r="4" fill="#fff9b0" stroke="#8a7a1a"/>' + p('M6 10v3h4v-3M6 14.500h4', '#666', 1.2),
  sun: '<circle cx="8" cy="8" r="7.300" fill="#b8cfe4"/><circle cx="8" cy="8" r="6" fill="#ffe23a" stroke="#b89a1a"/>',
  vpfreeze: p('M9 8h7v7H9z', '#889', 1, '#fff') + '<circle cx="7" cy="7" r="5.500" fill="#b8c7d4" stroke="#7690a8"/>' + p('M7 2v10M2 7h10M3.500 3.500l7 7M10.500 3.500l-7 7', '#6b89a5', .8),
  unlock: p('M1 8V4c0-4 6-4 6 0v3', '#8a8012', 1.8) + '<ellipse cx="10.500" cy="11" rx="4.500" ry="4.500" fill="#e8dc32" stroke="#8a8012"/>' + p('M6.500 9.500h8M6.500 12.500h8', '#8a8012', .9),
  layercur: stack + f('M1 10l8-2 6 3-7 4z', '#f0d83a') + p('M0 16l4-4M1 12h3v3', '#111', 1),
  layerprev: stack + p('M5 7c0-6 6-6 7 0', '#1d3f7a', 2.2) + f('M1 6h7l-4 4z', '#1d3f7a'),
  layerstate: stack + p('M7 7h8v8H7zM7 9h8M9 12h4', NAVY, 1.4, '#fff'),
  vpdlg: p('M1 1h13v10H1zM1 6h13M7 1v10', NAVY, 1.3, '#cfe0f3') + p('M5 7h10v8H5zM7 10h6M7 12.500h6', NAVY, 1, '#eef5fc'),
  vpone: p('M1 1h14v14H1z', NAVY, 1.3, '#fff') + f('M3 3h10v10H3z', '#a8c6e0') + p('M3 3h10v10H3z', '#7fa4c8', .8),
  vppoly: p('M8 1h7v14H1V8h7z', NAVY, 1.3, '#fff') + p('M10 4h3v9H3v-3h7z', '#5f8ab4', 1, '#a8c6e0'),
  vpobj: p('M1 1h8v6H1z', '#6a6432', 1.1, '#f4e678') + p('M8 9h8v6H8zM10 11h4v2h-4z', NAVY, 1.2, '#cfe0f3') + p('M10 3h4v4M12 5l2 2 2-2', '#111', 1.1),
  vpclip: p('M1 1h10v4H1zM1 10h10v5H1z', NAVY, 1.3, '#a8c6e0') + p('M3 6l8 5M3 10l8-4', '#667', 1.3) + '<circle cx="14" cy="6" r="2" fill="none" stroke="#223"/><circle cx="14" cy="12" r="2" fill="none" stroke="#223"/>',

  // dimensions
  dlin: p('M.5 1v14M15.500 1v14M1 5h14') + f('M1 5l4-2.500v5zM15 5l-4-2.500v5z', '#000'),
  dali: p('M1 6l5-5M10 15l5-5M4 4l8 8', '#000', 1.4) + f('M3 3l5 1-4 4zM13 13l-5-1 4-4z', '#000'),
  darc: p('M1 14C1 6 6 1 14 1', '#555', 1.3) + p('M7 15c0-5 3-8 9-8') + f('M16 7l-5-2v5zM7 16l-3-5h5z', '#000') + dots([1.5, 14], [14.5, 1.5]),
  dord: p('M5 5v10M5 9h3l2-2 1 3h4M8 9v6M15 10v5', '#111', 1.2) + txt('X', 12, 5, 6, NAVY) + txt('Y', -1, 8, 6, NAVY) + txt('0', 4, 4, 6, NAVY) + txt('0', -1, 15, 6, NAVY),
  drad: '<circle cx="8" cy="8" r="7.500" fill="none" stroke="#666"/>' + p('M8 8L4 4') + f('M2 2l5 2-3 3z', '#000'),
  djog: p('M3 2c5-3 12 1 12 8', '#777', 1.2) + p('M12 5L8 9l3 1-7 5', '#000', 1.3) + f('M14 2l-1 6-4-3z', '#000'),
  ddia: '<circle cx="8" cy="8" r="7.500" fill="none" stroke="#666"/>' + p('M4 4l8 8') + f('M3 3l5 1.500-3 3zM13 13l-5-1.500 3-3z', '#000'),
  dang: p('M0 15h16M0 8l9-8M8 3c4 2 6 6 6 11') + f('M6 2l5 0-2 4zM14 15l-3-5h5z', '#000'),
  dquick: hdim(5) + p('M.5 1v14M15.500 1v14') + f('M4 2l8 4v9L4 9z', '#f0dc1e') + p('M4 2l9 12', '#554c00', 1) + p('M1 5h14'),
  dbase: p('M1 1v14M15 1v4M11 6v8M1 3h14M1 9h10') + f('M2 3l3-2v4zM14 3l-3-2v4zM2 9l3-2v4zM10 9l-3-2v4z', '#000'),
  dcont: p('M.5 1v14M8 1v14M15.500 1v14M1 7h15', '#000', 1) + f('M8 7l-3-2v4zM8 7l3-2v4zM1 7l3-2v4zM15 7l-3-2v4z', '#000'),
  dspace: p('M.5 0v5M15.500 0v5M.5 11v5M15.500 11v5M1 2h14M1 14h14', '#000', 1.2) + p('M8 4.500h4v7H8z', '#8a5a10', 1.2, '#f6cf3a') + '<path d="M5 5v7M8 6v5" stroke="#1d4e89" fill="none" stroke-dasharray="1 1"/>',
  dbreak: p('M0 6h5M11 6h5', NAVY, 1.3) + p('M8 0v13', '#000', 1.5) + f('M8 16l-3-5h6z', '#000') + f('M6 6L3 4v4zM10 6l3-2v4z', NAVY),
  dtol: p('M0 3h16v10H0zM9 3v10', NAVY, 1.2, '#dcebf8') + '<circle cx="4.500" cy="8" r="2.200" fill="none" stroke="#1d4e89"/>' + p('M4.500 4v8M1 8h7', NAVY, 1) + txt('.1', 9, 11.5, 8, NAVY, 'bold'),
  dcen: '<circle cx="8" cy="8" r="7.500" fill="none" stroke="#666"/>' + p('M8 5v6M5 8h6', '#000', 1.8),
  dinsp: hdim(4) + '<circle cx="9" cy="11" r="4.800" fill="#3aa63a"/>' + p('M6.500 11l2 2 3-5', '#fff', 1.6),
  djogl: p('M.5 1v14M1 8h4l3 4 4-10 2 9h2', '#222') + f('M1 8l4-3v6z', '#000'),
  dedit: hdim(13) + txt('A', 3, 10, 12, '#1d5f9e', 'bold'),
  dtedit: hdim(13) + p('M6 9l7-8', '#9a7a10', 4) + p('M6 9l7-8', '#f2d040', 2.2) + f('M3 12l1-4 3 2z', '#333'),
  dupd: p('M3 1v13M15 1v13M3 3h12', NAVY, 1.2) + p('M.5 5v11M12 5v11M1 9h11') + f('M1 9l3-2v4zM12 9l-3-2v4z', '#000'),

  // text
  A: txt('A', 2, 14, 17, '#111'),
  AI: txt('A', 0, 14, 16, '#111') + p('M11 1h5M13.500 1v14M11 15h5', NAVY, 1.2),
  Aedit: txt('A', 0, 15, 16, '#111') + p('M8 12l6-10', '#9a7a10', 3.6) + p('M8 12l6-10', '#f2d040', 2) + f('M6 15l1-4 2 2z', '#333'),
  find: lens(7, 7, 6) + p('M10 12l4 4', '#8a6a3a', 2.4) + txt('abc', 2, 10, 8, '#1d3f7a', 'bold'),
  abc: txt('ABC', 0, 7, 7.5, '#222', 'bold') + p('M5 10l3 4 6-6', '#3d86c8', 2.4),
  Ascale: p('M0 1h15v14', '#3d6a94', 1.2, '#e4f0fa') + f('M0 1h15v14H0z', '#e4f0fa') + '<path d="M1 6h9v9H1z" fill="none" stroke="#222" stroke-dasharray="1 1"/>' + txt('A', 3, 14, 8, '#111', 'bold'),
  Ajust: p('M2 1h12v13H2z', NAVY, 1.4, '#fff') + txt('A', 3, 13, 13, '#111', 'bold') + dots([2, 14.500], [14.500, 6]),
  Aconv: p('M0 2h16', '#e4b820', 3.5) + p('M2 0v3M5 0v3M8 0v3M11 0v3M14 0v3', '#5a4500', 1) + p('M2 5v9h8M0 12l4 3M5 6v6h5', NAVY, 1.4) + p('M10 14l5-8M13 6h3v3M10 12v3h3', '#111', 1),

  // draw
  line: p('M2 14L14 2', '#333') + dots([2, 14], [14, 2]),
  xline: p('M1 15L15 1', '#333') + f('M0 16l1-5 4 4zM16 0l-1 5-4-4z', '#222') + dots([8, 8]),
  pline: p('M2 12h9c6 0 5-7 0-7H8', '#335', 1.3) + dots([2, 12], [11, 12], [8, 4]),
  polygon: p('M8 2l6.500 5-2.500 7.500H4L1.500 7z', '#334', 1.2, '#dce8f2'),
  rect: p('M1.500 4.500h13v8h-13z', '#223', 1.3, '#e8f1f8') + dots([14, 4], [2, 13]),
  arc: p('M1 15C2 8 6 3 15 2', '#334') + dots([1.500, 14], [5, 6], [14.500, 2]),
  circle: '<circle cx="8" cy="8" r="7" fill="#e4eef6" stroke="#223344" stroke-width="1.300"/>' + p('M8 8l4-4', NAVY) + dots([8, 8]),
  cloud: p('M3 8C-1 5 2 0 6 2c2-3 8-1 6 3 4 0 5 6 0 6 1 4-4 5-6 2-4 1-5-3-3-5z', '#334', 1.2, '#e4eef6'),
  spline: p('M1 14C2 4 5 6 8 9s6 1 7-7', '#444', 1.2),
  ellipse: '<ellipse cx="8" cy="8" rx="6.500" ry="4" fill="#e4eef6" stroke="#223344" stroke-width="1.300"/>' + dots([1.500, 8], [14.500, 8], [8, 4], [8, 12]),
  earc: p('M2 9C1 3 14 2 14.500 8c0 3-3 4-6 4', '#445', 1.3, '#e4eef6') + dots([2, 8], [8, 12.500]),
  insert: p('M6 0h7l3 3v8H6z', '#3d6a94', 1, '#cfe4f5') + p('M1 4h8v8H1z', NAVY, 1.2, '#f4ea8c') + '<circle cx="10" cy="11" r="3.500" fill="#f4ea8c" stroke="#1d4e89"/>' + f('M16 12v4h-4z', '#000'),
  block: p('M3 3h8v7H3z', NAVY, 1.2, '#f4ea8c') + '<circle cx="11" cy="11" r="3.500" fill="#f4ea8c" stroke="#1d4e89"/>' + dots([3, 10]),
  point: '<rect x="7.500" y="7.500" width="2.500" height="2.500" fill="#0a6fc8"/>',
  hatch: f('M3 3h10v10H3z', '#fff') + p('M0 3.500h16M0 12.500h16M3 0v16M13 0v16', '#22527f', 1.2) + p('M3 8l5 5M3 3l10 10M8 3l5 5', '#3d6a94', .9),
  gradient: f('M3 3h10v10H3z', '#2c3c5c') + f('M3 8h5v5H3z', '#6f7048') + p('M0 3.500h16M0 12.500h16M3 0v16M13 0v16', '#222', 1.2),
  region: p('M1 2h9l5 5v8H1z', '#2b5a8c', 1.2, '#dcebf8') + '<circle cx="8" cy="9" r="3" fill="#fff" stroke="#1d4e89" stroke-width="1.200"/>',
  table: p('M2 2h13v12H2zM2 8h13M2 11h13M6.500 2v12M11 2v12', '#3f6bab', 1.1, '#e9f1fb') + f('M2 2h13v3H2z', '#5c8ccc'),
  dist: '<path d="M1 3.500h14" stroke="#222" stroke-dasharray="2 1"/>' + dots([1.5, 3.5], [14.5, 3.5]) + f('M0 9h16v5H0z', '#e4b820') + p('M2 9v3M5 9v3M8 9v3M11 9v3M14 9v3', '#5a4500', 1),
  area: f('M1 0l13 5v6H1z', '#3d6a94') + f('M0 11h16v5H0z', '#e4b820') + p('M2 11v3M5 11v3M8 11v3M11 11v3M14 11v3', '#5a4500', 1),
  mass: f('M1 4l6-3 9 3v5l-4 2L1 9z', '#b8d0e4') + f('M1 4l8 4v3H1z', '#2b5a8c') + p('M1 4l8 3 7-3M9 7v4', NAVY, .8) + f('M0 12h16v4H0z', '#e4b820') + p('M2 12v3M5 12v3M8 12v3M11 12v3M14 12v3', '#5a4500', 1),
  list: p('M5 1l10 1-3 3-1 9-9 1 2-4z', '#4f6f90', 1, '#dfeaf3') + p('M6 5l5 1M6 8l4 1M5 11l5 1', '#3d6a94', 1.1),
  locate: p('M2 2v12h13', NAVY, 1.6) + f('M2 0L0 4h4zM16 14l-4-2.500v5z', NAVY) + lens(10, 6, 4) + dots([10, 6]) + p('M7 9l-4 4', '#3d6a94', 1),

  // modify
  erase: f('M8 8l5-7 3 2-6 8z', '#d9b03c') + f('M3 11l4-3 4 3-3 3z', '#fff') + f('M1 12l3-2 4 3-3 2z', '#d85a4a') + p('M0 15.500h13', '#444', 1) + p('M8 8l5-7', '#222', 1),
  mcopy: '<circle cx="4" cy="4" r="3" fill="#fff" stroke="#334"/><circle cx="3.500" cy="7" r="2.500" fill="#dde" stroke="#334"/><circle cx="10" cy="10" r="3" fill="#fff" stroke="#334"/><circle cx="12.500" cy="13" r="2.500" fill="#dde" stroke="#334"/>' + p('M7 1c4-1 6 1 6 5M11 4l2 3 2-3', NAVY, 1.6),
  mirror: p('M6 2v12H1z', '#222', 1.1, '#fff') + p('M10 2v12h5z', '#222', 1.1, '#b8d0e4') + p('M8 0v16', '#1d8ad8', 1.2),
  offset: p('M1 14h14v-3l-2-1h-2V5c0-5-6-5-6 0v3H3L1 10z', '#223', 1.2, '#cfe4f5') + p('M4 11h4V6M8 11h4', '#1d6fb8', 1.3),
  array: p('M1 1h5v5H1zM10 1h5v5h-5zM1 10h5v5H1zM10 10h5v5h-5z', '#223', 1.4, '#fff'),
  move: p('M8 2v12M2 8h12', '#4a78a8', 2) + f('M8 0l3 4H5zM8 16l3-4H5zM0 8l4-3v6zM16 8l-4-3v6z', '#4a78a8'),
  rotate: p('M11 3a6 6 0 1 1-6 0', '#4a78a8', 2.6) + f('M3 1h6v5z', '#4a78a8'),
  scale: f('M1 1h14v14H1z', '#dcebf8') + p('M1 8V1h14v14H8', '#3d6a94', 1) + '<path d="M1 8h7v7H1z" fill="none" stroke="#222" stroke-dasharray="1 1"/>',
  stretch: '<path d="M8 1H1v14h7" fill="none" stroke="#222" stroke-dasharray="2 1"/>' + p('M7 1l8 14H7z', '#223', 1.2, '#cfe0ee'),
  trim: p('M0 8h5', '#222', 1.4) + p('M5 13L11 3', NAVY, 1.3) + '<path d="M9 8h7" stroke="#1d8ad8" stroke-width="1.400" stroke-dasharray="2 1"/>',
  extend: p('M0 8h4', '#222', 1.4) + p('M10 13L16 3', NAVY, 1.3) + '<path d="M6 8h6" stroke="#1d8ad8" stroke-width="1.400" stroke-dasharray="2 1"/>',
  breakpt: p('M1 3h14v10H1z', '#223', 1.3, '#e4eef6') + dots([10, 3]),
  break: p('M4 3H1v10h14V3h-3', '#223', 1.3, '#e4eef6') + dots([4, 3], [12, 3]),
  join: p('M0 8h5M11 8h5', '#222', 1.4) + f('M8 8L4 4v8zM8 8l4-4v8z', '#2c4a6c'),
  chamfer: '<path d="M1 4V1h13" fill="none" stroke="#222" stroke-dasharray="1 1"/>' + p('M1 16V10M9 1h7', '#222', 1.2) + p('M1 10L10 1', '#1d8ad8', 1.4),
  fillet: '<path d="M1 4V1h13" fill="none" stroke="#222" stroke-dasharray="1 1"/>' + p('M1 16v-4M12 1h4', '#222', 1.2) + p('M1 12C2 5 5 2 12 1', '#1d6fb8', 2),
  explode: f('M1 6l4 1 1-3 2 3 4-2-2 4 3 3-4 0-1 4-2-3-5 1 3-4z', '#e0341c') + f('M3 9l3-1 3 1-2 3-3 0z', '#ffc02a') + p('M9 6l5-4M10 2l1 2M13 5h3', '#5a82ac', 1.2),
  posnum: p('M0 15l7-7h7', '#555', 1.2) + txt('1', 9, 6, 9, '#111', 'bold'),
  spec: f('M0 1h16v14H0z', '#8f9016') + f('M0 1h16v4H0z', '#f012d8') + p('M.5 1v14M5.500 1v14M10.500 1v14M15.500 1v14M0 1.500h16M0 5h16M0 8h16M0 10.500h16M0 13h16M0 15h16', '#111', .8),
  mblock: p('M5 9l5-5 6 0-4 5zM5 9h7v6H5zM12 15l4-5', '#444', 1.1, '#e8e6da') + txt('M', -1, 8, 10, '#a01818', 'bold'),
  c1: p('M0 8h16M0 13h16M2 6v10M14 6v10', '#222', 1.5) + txt('C1', 4, 5, 7, '#111', 'bold'),
  pens: p('M1 2h8v10H3z', '#333', 1, '#eee') + f('M10 1l3 7-5 8-2-5z', '#222') + p('M14 3v6c0 4-4 6-6 6M3 4h5M3 7h4', '#222', 1.4),

  // coordinate systems
  ucs: axes,
  ucsworld: axes + '<circle cx="10.500" cy="5.500" r="5" fill="#4a8fd0"/>' + f('M7 4l4-3 3 3-4 4z', '#58b058'),
  ucsprev: arms + p('M13 11c1-6-3-7-7-5', '#1d3f7a', 2) + f('M4 6l5-4v7z', '#1d3f7a'),
  ucsobj: axes + f('M8 3l3-2h5v5l-3 3H8z', '#8a8142') + f('M8 3h5v5H8z', '#f4ea9c') + p('M8 3h5v5', '#222', .8),
  ucsface: axes + f('M7 1h9v7H7z', '#1d5f9e'),
  ucsview: axes + p('M7 1h9v7H7z', '#4a7aaa', 1, '#dff0fa'),
  ucsorg: axes + p('M0 11h4v4H0z', '#000', 1.2, '#fff'),
  ucsz: axes + txt('Z', 11, 5, 8, '#222', 'bold'),
  ucs3: axes + txt('3', 11, 5, 8, '#222', 'bold'),
  ucsrx: arms + rot + txt('X', 7, 12, 8, '#222', 'bold'),
  ucsry: arms + rot + txt('Y', 7, 12, 8, '#222', 'bold'),
  ucsrz: arms + rot + txt('Z', 7, 12, 8, '#222', 'bold'),
  ucsapply: arms + p('M6 1h9v4H6zM10.500 1v4', NAVY, 1.2, '#fff') + p('M8 11c3 0 3-2 3-4M9 9l2-2 2 2', NAVY, 1.3),

  // status bar and taskbar
  annovis: p('M4 15L7 7l5 6M2 13h9M5 9l-3 3M7 7v8', '#3d6a94', 1.1) + '<circle cx="11" cy="4" r="3.500" fill="#ffe65a" stroke="#c8a41c" stroke-width=".8"/>',
  annoauto: p('M2 15L6 8l5 5M1 13h9M6 8v7', '#8a8a84', 1.1) + f('M8 9l5-9 2 2-3 7z', '#8f8f88'),
  wrench: p('M2 15L11 6M10 6c-1-4 2-6 4-5l-2 3 2 1 2-2c0 4-3 5-5 4', '#555', 1.3, '#fff'),
  padlock: p('M8 7V4c0-4 6-4 6 0v4', '#444', 2) + f('M1 7h11v9H1z', '#e8c81c') + p('M1 7h11v9H1z', '#4a3c00', 1.2) + f('M5 10h3v4H5z', '#222'),
  trust: f('M2 1h9l3 3v9H2z', '#4f7796') + p('M4 3v4M7 3v4M3 5h6', '#dceaf4', 1.3) + '<circle cx="11" cy="11" r="4.500" fill="#2faf3a"/>' + p('M9 11l2 2 3-4', '#fff', 1.5),
  flag: f('M2 2q3-2 6 0L7 8q-3-2-6 0z', '#f0582c') + f('M9 2.500q3 2 6 0L14 8q-3 2-6 0z', '#7ccc3c') + f('M1 9q3-2 6 0l-1 6q-3-2-6 0z', '#4a9cf0') + f('M8 9.500q3 2 6 0l-1 5.500q-3 2-6 0z', '#fbd02c'),
  winamp: f('M8 0h5l-4 6h4l-9 10 2-7H2z', '#f09c28') + p('M1 9l4-6M15 6l-5 8', '#d8dce0', 2),
  folder: f('M1 3l5-1 2 2h7v10H1z', '#e0a828') + f('M1 6h14v9H1z', '#f9dc78') + p('M1 6h14v9H1z', '#b8841c', .8),
  word: p('M4 0h10l2 2v13H4z', '#8ea4c8', 1, '#fff') + f('M0 3h10v10H0z', '#2f5cb0') + txt('W', 1, 11, 8.500, '#fff', 'bold') + p('M11 4h3M11 7h3M11 10h3', '#7f9acb', 1),
  expand: '<circle cx="8" cy="8" r="8" fill="#1c7ee8" stroke="#9cd0fa"/>' + p('M9.500 4.500L6 8l3.500 3.500', '#fff', 2),
  shield: f('M0 0h12l4 4v8l-4 4H4l-4-4z', '#e03a1c') + '<circle cx="8" cy="8" r="5" fill="#e03a1c" stroke="#fff" stroke-width="1.600"/><circle cx="8" cy="8" r="2" fill="#fff"/>',
  tablet: p('M1 1h10v14H1zM11 3l4-2v13l-4 1', '#222', 1.2, '#b8c4c4') + p('M3 4l5 5M8 4v5H3', '#2b6a5c', 1.3)
};

document.querySelectorAll('[data-icon]').forEach(el => {
  el.innerHTML = `<svg viewBox="0 0 16 16">${icons[el.dataset.icon]}</svg>`;
});

// distributed load: 11 slanted arrows, 21 units apart
let load = '';
for (let k = 0; k < 11; k++) {
  const x = 517 + k * 21;
  load += `<path class="w1" d="M${x - 15} 504L${x} 488"/><path d="M${x - 13} 492L${x - 1} 488L${x - 2} 498"/>`;
}
document.getElementById('load').innerHTML = load;

// sign marks on the diagrams
const signs = [[797, 725, '-'], [775, 775, '-'], [903, 708, '+'], [944, 762, '+'], [1145, 749, '+']];
document.getElementById('signs').innerHTML = signs.map(([x, y, s]) =>
  `<circle cx="${x}" cy="${y}" r="5.500"/><path d="M${x - 6} ${y + .5}h12"/>` + (s === '+' ? `<path d="M${x + .5} ${y - 6}v12"/>` : '')
).join('');
```
